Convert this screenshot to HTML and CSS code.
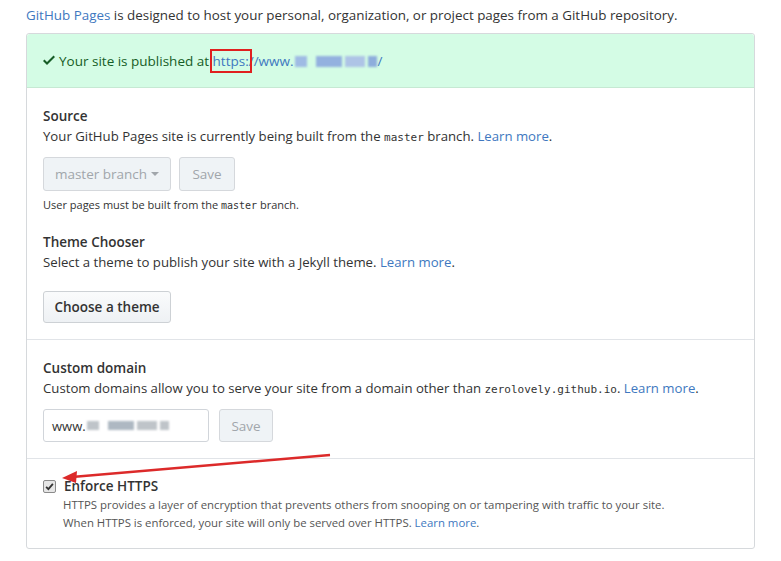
FILE: index.html
```html
<!DOCTYPE html>
<html>
<head>
<meta charset="utf-8">
<link rel="stylesheet" href="styles.css">
</head>
<body>
<div class="page">
  <p class="intro"><a class="link">GitHub Pages</a> is designed to host your personal, organization, or project pages from a GitHub repository.</p>
  <div class="box">
    <div class="flash">
      <svg class="check" width="12" height="11" viewBox="0 3 12 11"><path d="M12 5l-8 8-4-4 1.5-1.5L4 10l6.5-6.5L12 5z" fill="#165c26"/></svg>
      <span>Your site is published at <a class="link url"><span class="mark">https:</span>//www.<span class="blur"><i class="b1"></i><i class="b2"></i><i class="b3"></i><i class="b4"></i></span>/</a></span>
    </div>
    <div class="section">
      <h3 class="title">Source</h3>
      <p class="desc">Your GitHub Pages site is currently being built from the <code>master</code> branch. <a class="link">Learn more</a>.</p>
      <div class="row">
        <span class="btn disabled branch">master branch <span class="caret"></span></span>
        <span class="btn disabled save">Save</span>
      </div>
      <p class="note">User pages must be built from the <code>master</code> branch.</p>
      <h3 class="title theme-title">Theme Chooser</h3>
      <p class="desc">Select a theme to publish your site with a Jekyll theme. <a class="link">Learn more</a>.</p>
      <span class="btn theme-btn">Choose a theme</span>
    </div>
    <div class="section">
      <h3 class="title">Custom domain</h3>
      <p class="desc">Custom domains allow you to serve your site from a domain other than <code>zerolovely.github.io</code>. <a class="link">Learn more</a>.</p>
      <div class="row">
        <span class="input">www.<span class="blur small"><i class="b1"></i><i class="b2"></i><i class="b3"></i><i class="b4"></i></span></span>
        <span class="btn disabled save2">Save</span>
      </div>
    </div>
    <div class="section last">
      <div class="check-row">
        <span class="checkbox"><svg width="9" height="9" viewBox="0 0 12 12"><path d="M1.5 6.5l3 3 6-7" stroke="#333" stroke-width="2.4" fill="none"/></svg></span>
        <span class="title">Enforce HTTPS</span>
      </div>
      <p class="small-desc">HTTPS provides a layer of encryption that prevents others from snooping on or tampering with traffic to your site.<br>When HTTPS is enforced, your site will only be served over HTTPS. <a class="link">Learn more</a>.</p>
    </div>
  </div>
  <svg class="arrow" width="781" height="561" viewBox="0 0 781 561">
    <line x1="330" y1="455" x2="72" y2="477" stroke="#dc2a2a" stroke-width="2.5"/>
    <path d="M62 478 L77 471 L76 483 Z" fill="#dc2a2a"/>
  </svg>
</div>
</body>
</html>
```
FILE: styles.css
```css
html, body {
  margin: 0;
  padding: 0;
  background: #fff;
}
body {
  font-family: "Open Sans", "Noto Sans", sans-serif;
  font-size: 13.2px;
  color: #333;
}
.page {
  padding: 5px 26px 0 26px;
  width: 729px;
}
.intro {
  margin: 0 0 8px 0;
  line-height: 20px;
  font-size: 13.4px;
}
.link {
  color: #4078c0;
  text-decoration: none;
}
.box {
  border: 1px solid #d6d9dc;
  border-radius: 3px;
}
.flash {
  height: 53px;
  background: #d4fce5;
  border-bottom: 1px solid #c6e9d3;
  color: #165c26;
  display: flex;
  align-items: center;
  padding-left: 16px;
  font-size: 13.5px;
  border-radius: 3px 3px 0 0;
}
.check {
  margin-right: 4px;
}
.mark {
  outline: 2px solid #e0201f;
  outline-offset: 1px;
}
.blur {
  display: inline-flex;
  gap: 3px;
  vertical-align: middle;
  filter: blur(1px);
  margin: 0 1px;
}
.blur i {
  display: inline-block;
  height: 11px;
  background: #a9c3e6;
}
.blur .b1 { width: 12px; background: #9fbbe4; }
.blur .b2 { width: 26px; background: #93b1df; margin-left: 6px; }
.blur .b3 { width: 20px; background: #aec4e6; }
.blur .b4 { width: 9px; background: #8eaedc; }
.blur.small i { background: #bfc4c9; height: 9px; }
.blur.small .b2 { background: #aeb8c2; }
.section {
  padding: 18px 16px 16px 16px;
  border-bottom: 1px solid #e1e4e8;
}
.section.last {
  border-bottom: none;
  padding-top: 17px;
}
.title {
  margin: 0;
  font-size: 13.5px;
  font-weight: 600;
  line-height: 20px;
  color: #333;
}
.desc {
  margin: 0;
  line-height: 21px;
}
code {
  font-family: "DejaVu Sans Mono", monospace;
  font-size: 11px;
}
.row {
  display: flex;
  gap: 8px;
  margin-top: 9px;
}
.btn {
  display: inline-flex;
  align-items: center;
  justify-content: center;
  box-sizing: border-box;
  height: 34px;
  border: 1px solid #d5d8dc;
  border-radius: 3px;
  font-size: 13.5px;
}
.btn.disabled {
  background: #eff3f6;
  color: #a1a6ab;
}
.branch {
  width: 128px;
}
.caret {
  display: inline-block;
  border-top: 4px solid #a1a6ab;
  border-left: 4px solid transparent;
  border-right: 4px solid transparent;
  margin-left: 4px;
}
.save {
  width: 56px;
}
.note {
  margin: 5px 0 0 0;
  font-size: 11px;
  line-height: 18px;
}
.note code {
  font-size: 10px;
}
.theme-title {
  margin-top: 17px;
}
.theme-btn {
  margin-top: 18px;
  height: 32px;
  width: 128px;
  background: linear-gradient(#fafbfc, #eef1f4);
  border-color: #cdd1d5;
  color: #333;
  font-weight: 600;
}
.input {
  display: inline-flex;
  align-items: center;
  box-sizing: border-box;
  width: 166px;
  height: 33px;
  border: 1px solid #d1d5da;
  border-radius: 3px;
  padding-left: 8px;
  font-size: 13px;
  color: #333;
}
.save2 {
  width: 54px;
  height: 33px;
  margin-left: 2px;
}
.check-row {
  display: flex;
  align-items: center;
  gap: 8px;
}
.checkbox {
  display: inline-flex;
  align-items: center;
  justify-content: center;
  width: 11px;
  height: 11px;
  border: 1px solid #8b8b8b;
  border-radius: 2px;
  background: #e6e6e6;
}
.small-desc {
  margin: 0 0 0 20px;
  font-size: 11.4px;
  line-height: 18px;
  color: #555;
}
.arrow {
  position: absolute;
  left: 0;
  top: 0;
  pointer-events: none;
}
```
